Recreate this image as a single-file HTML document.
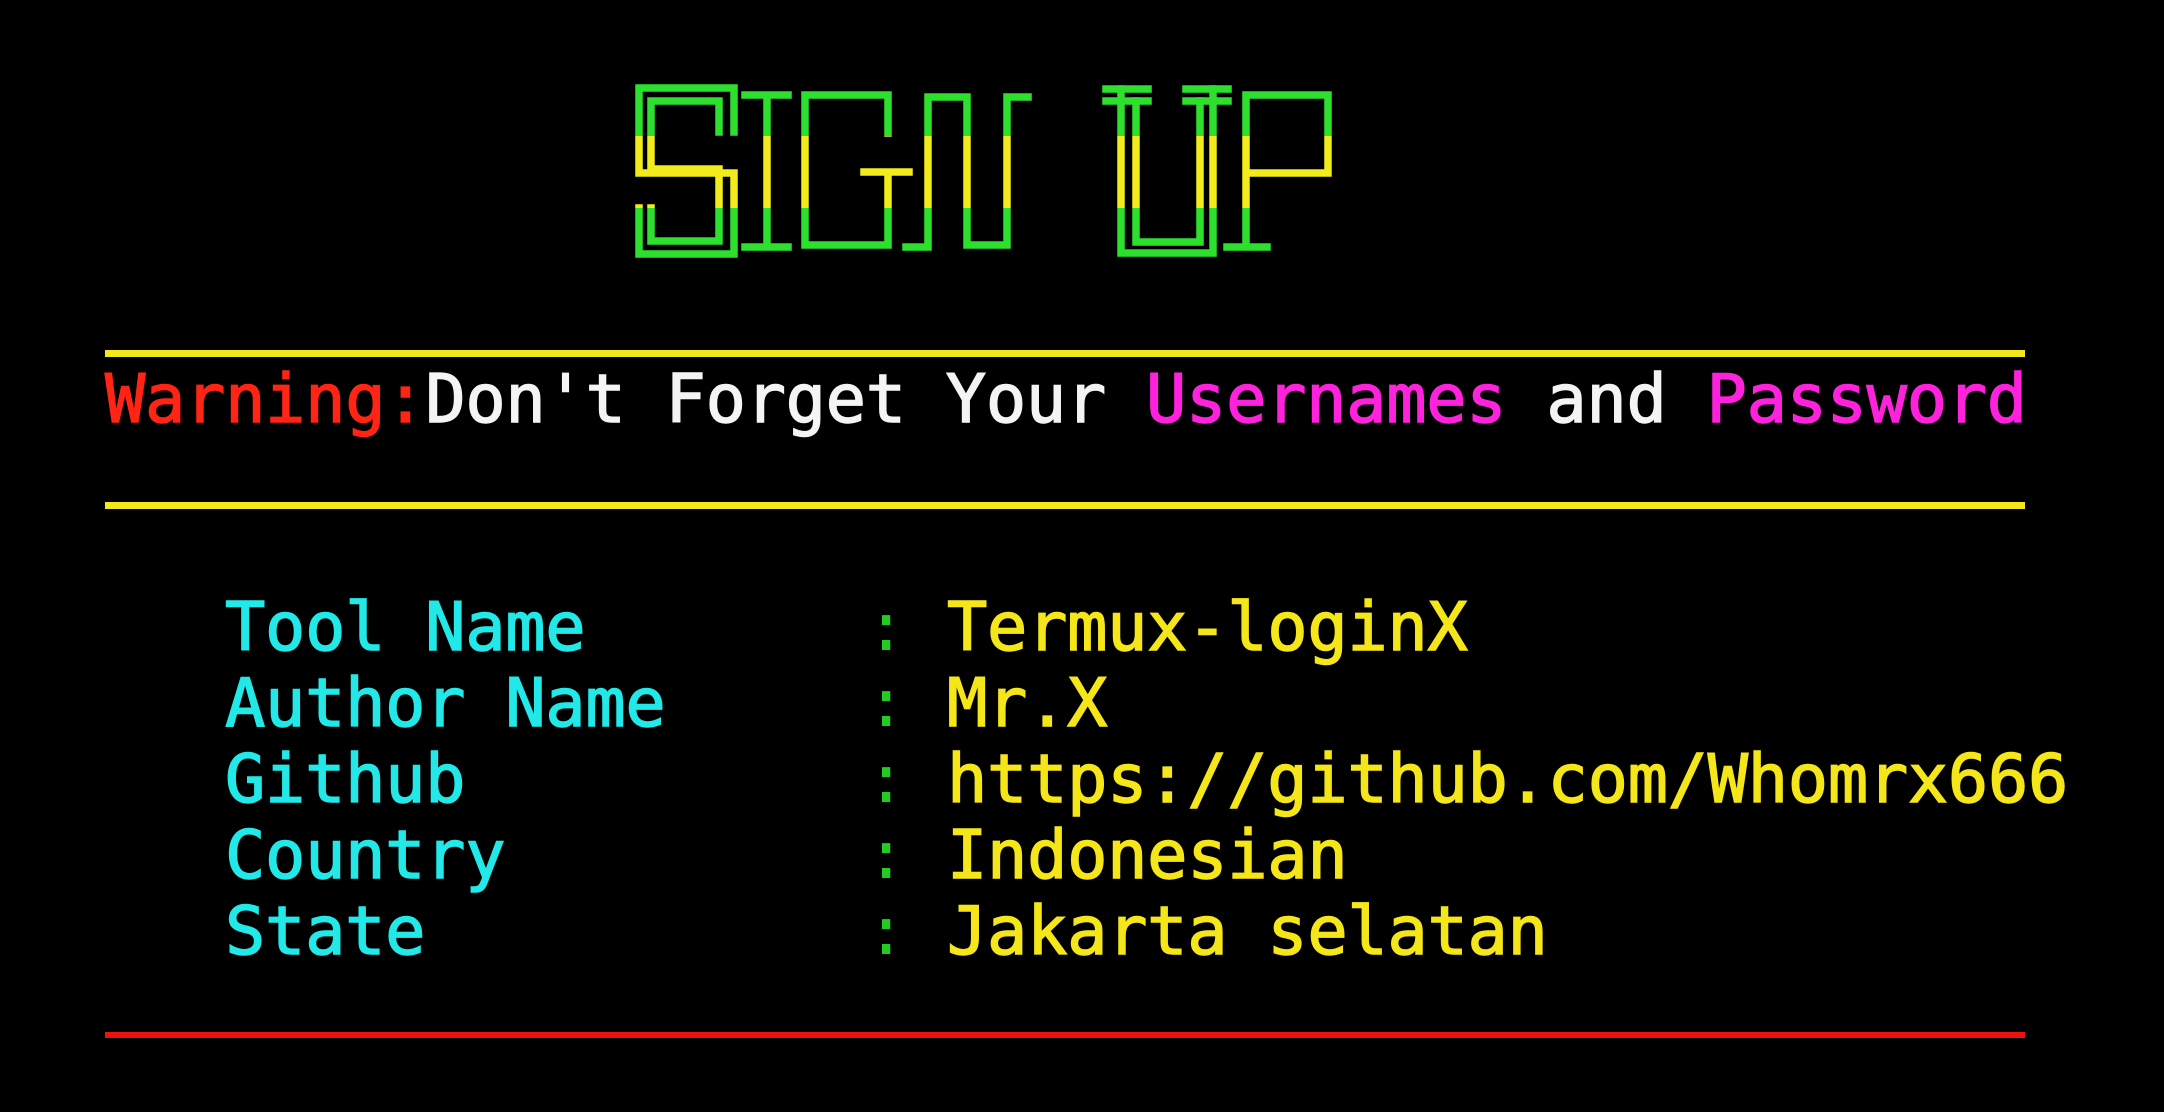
<!DOCTYPE html>
<html><head><meta charset="utf-8"><style>
html,body{margin:0;padding:0;background:#000;width:2164px;height:1112px;overflow:hidden}
svg{display:block}
text{font-family:"DejaVu Sans Mono","Liberation Mono",monospace;font-size:67px;letter-spacing:-0.3px;stroke-width:1.4px}
</style></head><body>
<svg width="2164" height="1112" viewBox="0 0 2164 1112" xmlns="http://www.w3.org/2000/svg">
<defs>
<linearGradient id="g" gradientUnits="userSpaceOnUse" x1="0" y1="80" x2="0" y2="260">
<stop offset="0" stop-color="#2ee02e"/><stop offset="0.31" stop-color="#2ee02e"/>
<stop offset="0.31" stop-color="#f2ec1c"/><stop offset="0.71" stop-color="#f2ec1c"/>
<stop offset="0.71" stop-color="#2ee02e"/><stop offset="1" stop-color="#2ee02e"/>
</linearGradient>
</defs>
<rect width="2164" height="1112" fill="#000"/>
<g fill="none" stroke="url(#g)" stroke-width="7.5" stroke-linecap="square">
<path d="M734 132 V88 H639 V173 H734 V254 H639 V208"/>
<path d="M719 132 V101 H651 V169 H719 V241 H651 V208"/>
<path d="M745 95 H788 M767 95 V247 M745 247 H788"/>
<path d="M888 133 V95 H805 V245 H888 V172 M864 172 H909"/>
<path d="M906 247 H928 V97 H967 V245 H1007 V97 H1028"/>
<path d="M1106 89 H1148 M1186 89 H1228 M1106 101 H1148 M1186 101 H1228"/>
<path d="M1121 89 V253 H1213 V89"/>
<path d="M1136 101 V242 H1200 V101"/>
<path d="M1227 247 H1267 M1246 247 V95 H1328 V173 H1246"/>
</g>
<rect x="105" y="350" width="1920" height="7" fill="#f2e81a"/>
<rect x="105" y="502" width="1920" height="7" fill="#f2e81a"/>
<rect x="105" y="1032" width="1920" height="6" fill="#ee1111"/>
<text x="105" y="422"><tspan fill="#ff2414" stroke="#ff2414">Warning:</tspan><tspan fill="#f4f4f4" stroke="#f4f4f4">Don't Forget Your </tspan><tspan fill="#ff22dd" stroke="#ff22dd">Usernames</tspan><tspan fill="#f4f4f4" stroke="#f4f4f4"> and </tspan><tspan fill="#ff22dd" stroke="#ff22dd">Password</tspan></text>
<g fill="#22e8e8" stroke="#22e8e8">
<text x="225" y="650">Tool Name</text>
<text x="225" y="726">Author Name</text>
<text x="225" y="802">Github</text>
<text x="225" y="878">Country</text>
<text x="225" y="954">State</text>
</g>
<g fill="#22cc22">
<text x="866" y="650">:</text><text x="866" y="726">:</text><text x="866" y="802">:</text><text x="866" y="878">:</text><text x="866" y="954">:</text>
</g>
<g fill="#f5e61a" stroke="#f5e61a">
<text x="947" y="650">Termux-loginX</text>
<text x="947" y="726">Mr.X</text>
<text x="947" y="802">https://github.com/Whomrx666</text>
<text x="947" y="878">Indonesian</text>
<text x="947" y="954">Jakarta selatan</text>
</g>
</svg>
</body></html>
